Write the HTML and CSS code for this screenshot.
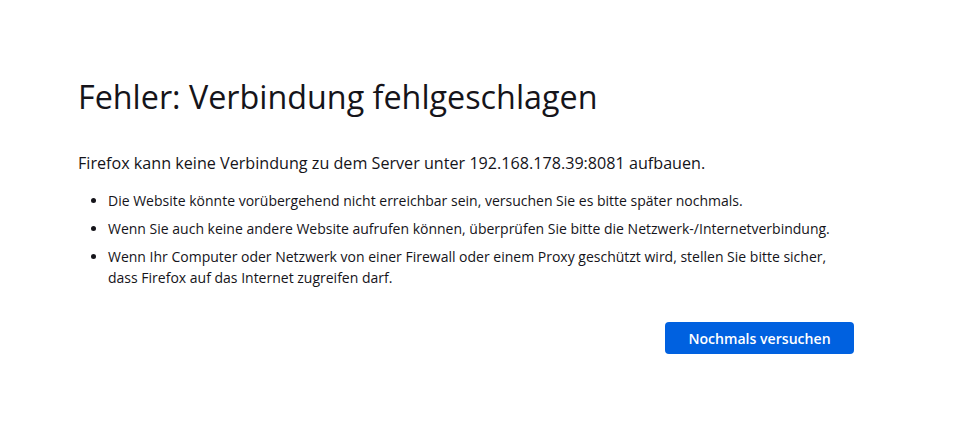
FILE: index.html
```html
<!DOCTYPE html>
<html lang="de">
<head>
<meta charset="utf-8">
<title>Fehler: Verbindung fehlgeschlagen</title>
<link rel="stylesheet" href="styles.css">
</head>
<body>
<main class="container">
  <h1 class="title">Fehler: Verbindung fehlgeschlagen</h1>
  <p class="intro">Firefox kann keine Verbindung zu dem Server unter 192.168.178.39:8081 aufbauen.</p>
  <ul class="list">
    <li>Die Website könnte vorübergehend nicht erreichbar sein, versuchen Sie es bitte später nochmals.</li>
    <li>Wenn Sie auch keine andere Website aufrufen können, überprüfen Sie bitte die Netzwerk-/Internetverbindung.</li>
    <li>Wenn Ihr Computer oder Netzwerk von einer Firewall oder einem Proxy geschützt wird, stellen Sie bitte sicher, dass Firefox auf das Internet zugreifen darf.</li>
  </ul>
  <div class="actions">
    <button class="btn">Nochmals versuchen</button>
  </div>
</main>
</body>
</html>
```
FILE: styles.css
```css
html, body {
  margin: 0;
  padding: 0;
  background: #ffffff;
}
body {
  font-family: "Open Sans", "Noto Sans", sans-serif;
  color: #15141a;
}
.container {
  margin-left: 78px;
  width: 776px;
  padding-top: 72px;
}
.title {
  margin: 0;
  font-size: 32.3px;
  font-weight: 400;
  line-height: 48px;
}
.intro {
  margin: 32px 0 0 0;
  font-size: 16.15px;
  line-height: 22px;
}
.list {
  margin: 16px 0 0 0;
  padding-left: 30px;
  font-size: 14px;
  line-height: 21px;
}
.list li {
  margin-bottom: 7px;
}
.actions {
  display: flex;
  justify-content: flex-end;
  margin-top: 34px;
}
.btn {
  font-family: inherit;
  font-size: 14.1px;
  font-weight: 600;
  color: #ffffff;
  background: #0061e0;
  border: none;
  border-radius: 4px;
  width: 189px;
  height: 32px;
  padding: 0;
}
```
